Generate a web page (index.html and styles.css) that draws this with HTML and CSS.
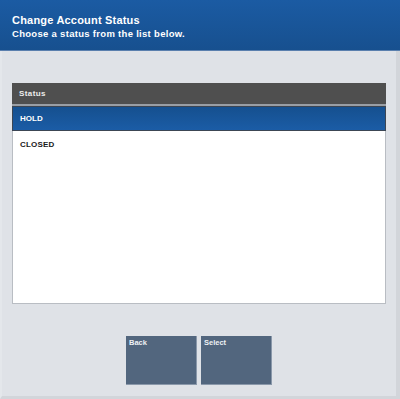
FILE: index.html
```html
<!DOCTYPE html>
<html>
<head>
<meta charset="utf-8">
<link rel="stylesheet" href="styles.css">
</head>
<body>
<div class="screen">
  <header class="header">
    <div class="title">Change Account Status</div>
    <div class="subtitle">Choose a status from the list below.</div>
  </header>
  <main class="content">
    <div class="list">
      <div class="list-head">Status</div>
      <div class="row selected">HOLD</div>
      <div class="row">CLOSED</div>
    </div>
    <div class="buttons">
      <div class="btn">Back</div>
      <div class="btn">Select</div>
    </div>
  </main>
</div>
</body>
</html>
```

FILE: styles.css
```css
html, body {
  margin: 0;
  padding: 0;
  width: 400px;
  height: 399px;
  overflow: hidden;
  font-family: "Liberation Sans", Arial, sans-serif;
}
.screen {
  width: 400px;
  height: 399px;
  display: flex;
  flex-direction: column;
  background: #dfe2e7;
  box-sizing: border-box;
  border-right: 4px solid #d2d5da;
  border-bottom: 3px solid #d2d5da;
  border-left: 2px solid #e4e7eb;
}
.header {
  height: 51px;
  margin: 0 -4px 0 -2px;
  background: linear-gradient(#1b5ba3, #17508f);
  border-bottom: 1px solid #5a7fae;
  box-sizing: border-box;
  padding: 14px 0 0 12px;
  color: #fff;
  font-weight: bold;
}
.title {
  font-size: 11px;
  line-height: 13px;
  letter-spacing: 0.2px;
}
.subtitle {
  font-size: 9.5px;
  line-height: 13px;
  letter-spacing: 0.3px;
}
.content {
  flex: 1;
  display: flex;
  flex-direction: column;
  padding: 32px 0 0 10px;
}
.list {
  width: 374px;
  height: 221px;
  box-sizing: border-box;
  background: #fff;
  border: 1px solid #b9bdc3;
  border-top: none;
}
.list-head {
  height: 21px;
  margin: 0 -1px;
  background: #4f4f4f;
  color: #ececec;
  font-size: 8px;
  font-weight: bold;
  line-height: 21px;
  letter-spacing: 0.4px;
  padding-left: 7px;
  border-bottom: 2px solid #9a9ea4;
}
.row {
  height: 25px;
  line-height: 27px;
  padding-left: 7px;
  font-size: 8px;
  font-weight: bold;
  letter-spacing: 0.2px;
  color: #1a1a1a;
}
.row.selected {
  margin: 0 -1px;
  padding-left: 7px;
  background: linear-gradient(#15508f, #1b5ca6);
  color: #fff;
  border: 1px solid #3c4654;
  height: 23px;
  line-height: 23px;
  letter-spacing: 0;
}
.buttons {
  display: flex;
  gap: 4px;
  margin: 32px 0 0 114px;
}
.btn {
  width: 71px;
  height: 49px;
  box-sizing: border-box;
  background: #52667e;
  border-right: 1px solid #8a98aa;
  border-bottom: 1px solid #8a98aa;
  color: #eef1f5;
  font-size: 7.5px;
  font-weight: bold;
  padding: 2px 0 0 3px;
}
```
